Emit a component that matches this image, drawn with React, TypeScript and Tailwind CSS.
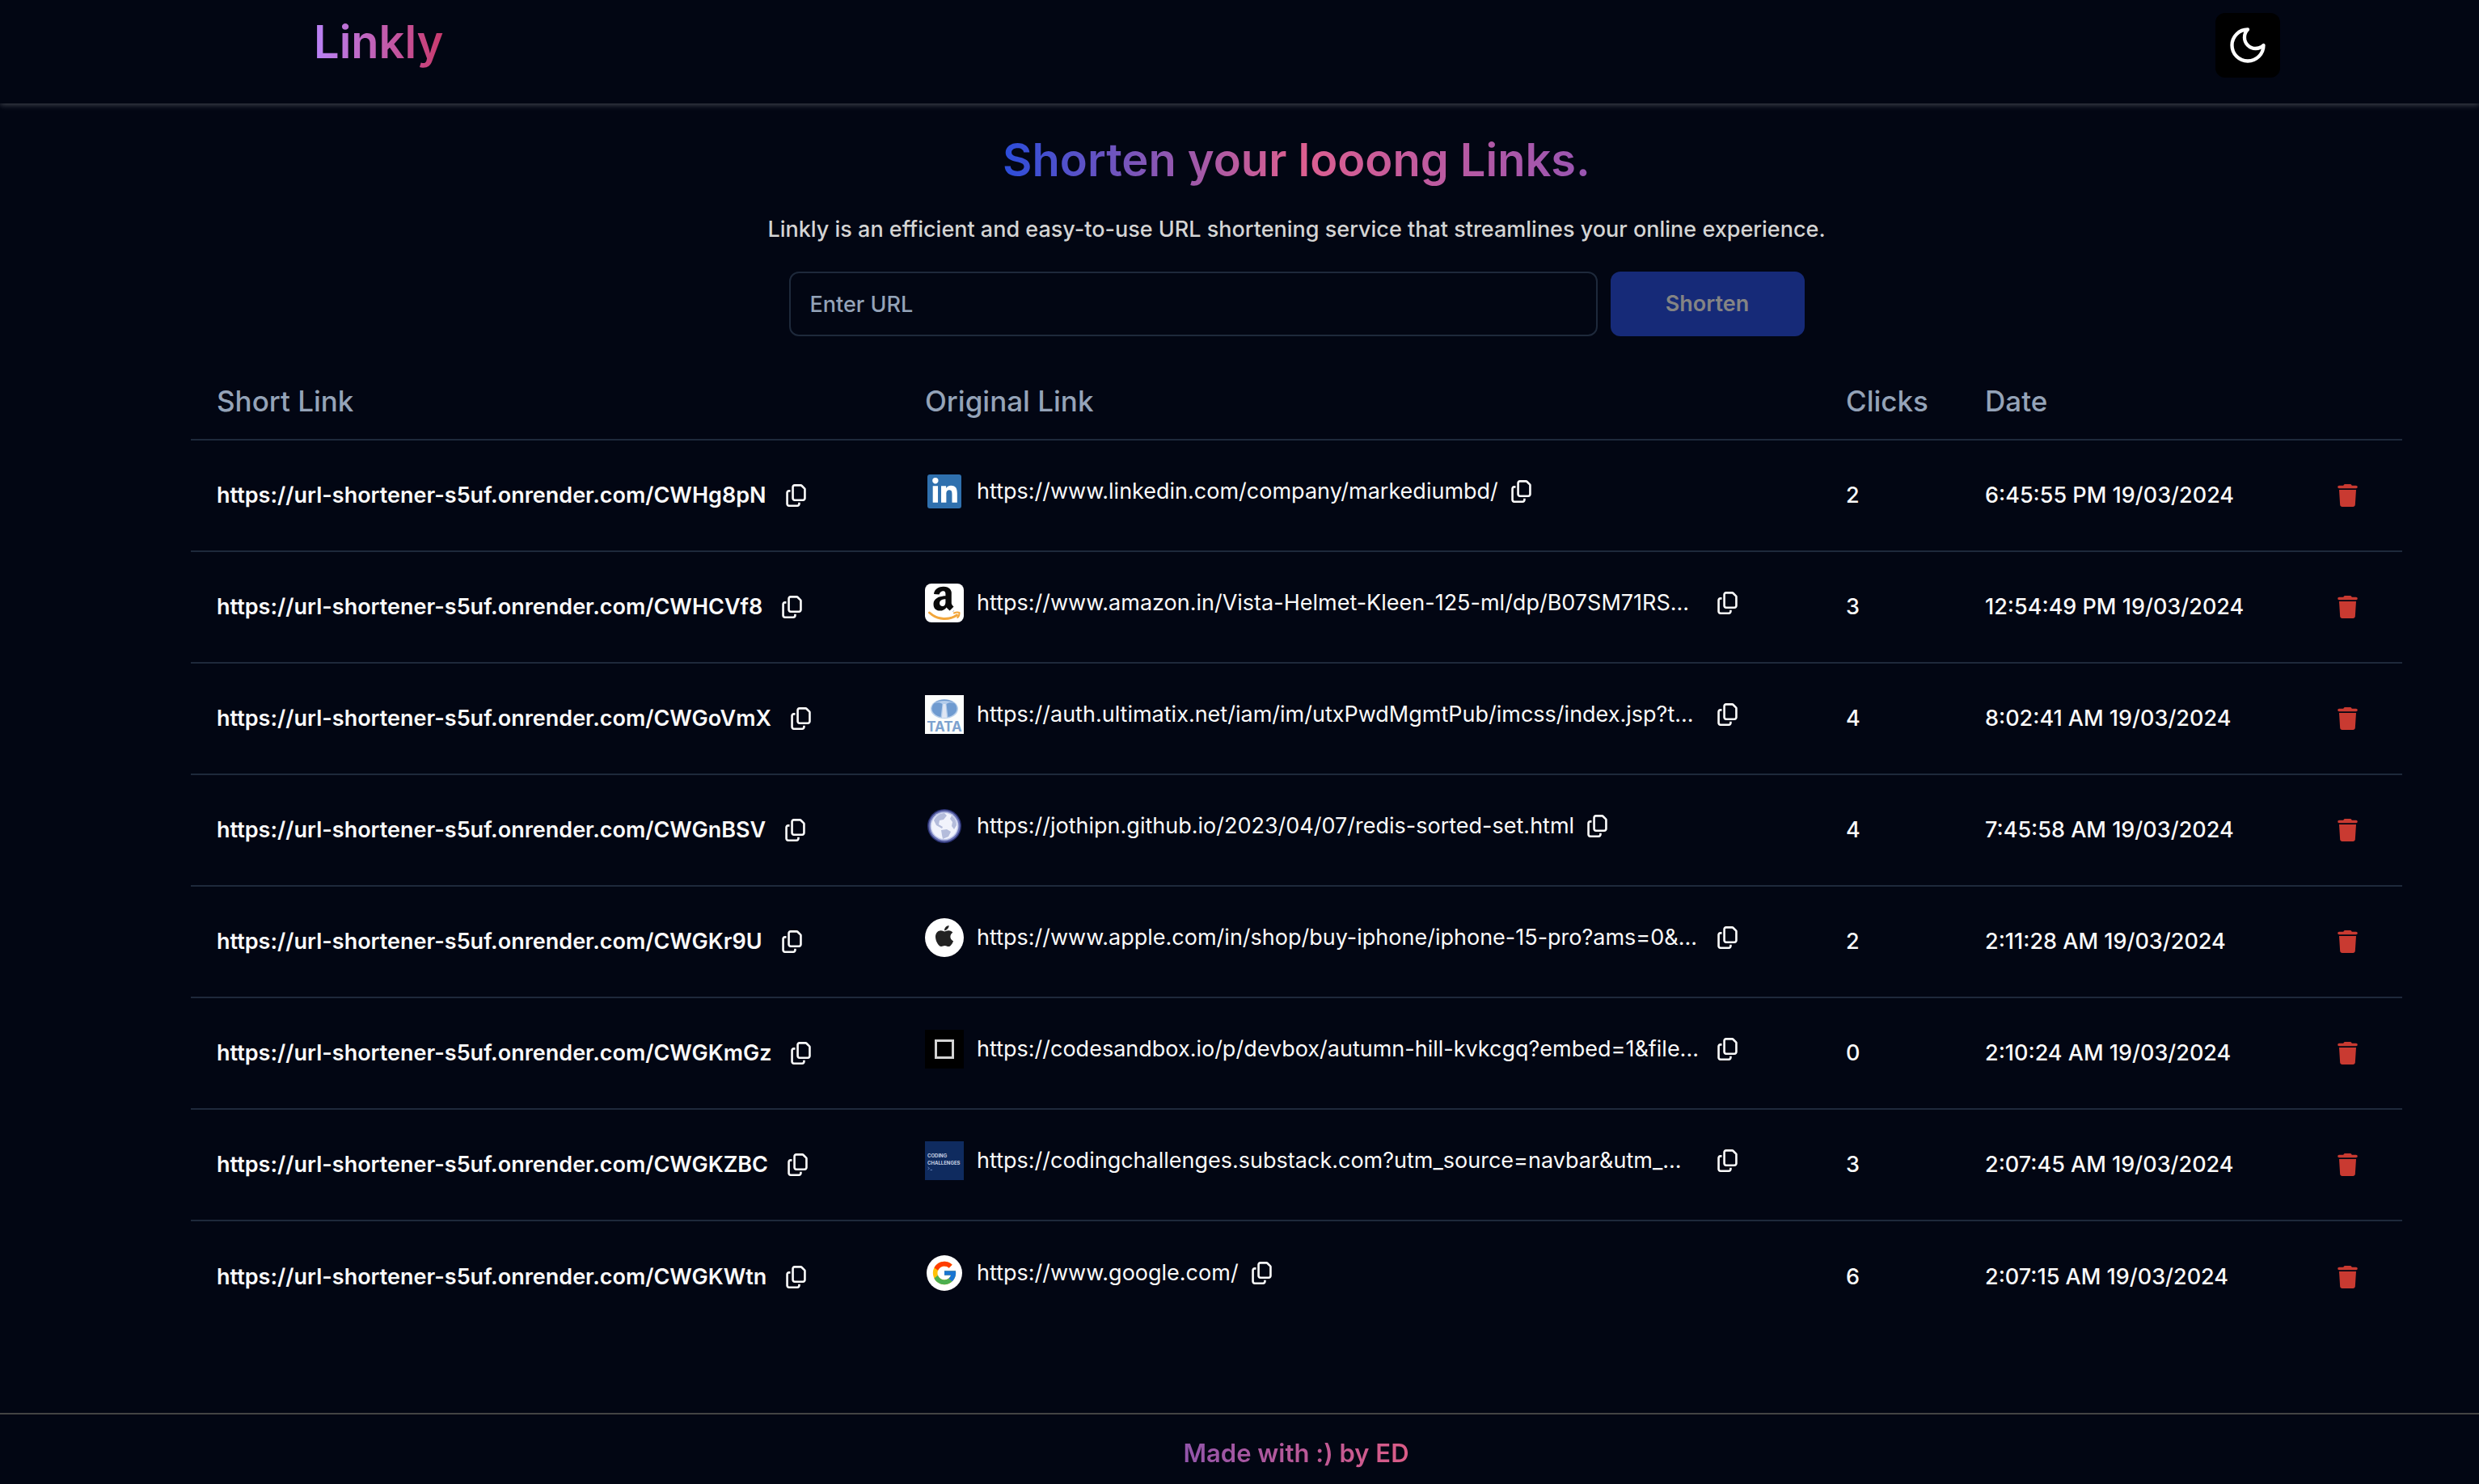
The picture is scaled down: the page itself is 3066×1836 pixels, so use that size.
import type { ReactNode } from "react";
import { FaAmazon, FaApple, FaLinkedinIn, FaRegCopy, FaTrash } from "react-icons/fa6";
import { FcGoogle } from "react-icons/fc";

function LinkedinFavicon() {
  return (
    <span className="flex size-12 items-center justify-center">
      <span className="flex size-[42px] items-center justify-center rounded-[3px] bg-[#2f70ae] text-white">
        <FaLinkedinIn size={35} />
      </span>
    </span>
  );
}

function AmazonFavicon() {
  return (
    <svg className="size-12 rounded-lg bg-white" viewBox="0 0 48 48" aria-hidden="true">
      <defs>
        <clipPath id="amazon-letter">
          <path d="M8 0h30v31l-3 3.5H11L8 30z" />
        </clipPath>
      </defs>
      <g clipPath="url(#amazon-letter)">
        <FaAmazon x={0} y={1} size={45} color="#0a0a0a" />
      </g>
      <path d="M5.5 36C16 45.500 30 45.500 39.500 39" fill="none" stroke="#f2a63b" strokeWidth="3" strokeLinecap="round" />
      <path d="M36 36.500c2.500-1.200 5-1.200 6.500-.5.200 2-.6 4.500-2.200 6" fill="none" stroke="#f2a63b" strokeWidth="2" strokeLinecap="round" strokeLinejoin="round" />
    </svg>
  );
}

function TataFavicon() {
  return (
    <svg className="size-12 bg-[#fcfdfc]" viewBox="0 0 48 48" aria-hidden="true">
      <ellipse cx="24" cy="17" rx="17" ry="12" fill="#b9d0ea" />
      <ellipse cx="24" cy="16.500" rx="15.500" ry="11" fill="#6f9bd0" />
      <path d="M11 10c7-4 19-4 26 0-5-1-8-1-10.500 1l2 17h-9l2-17C19 9 16 9 11 10z" fill="#b4cdec" />
      <path d="M22.500 11h3l1.500 17h-6z" fill="#dfe6f3" />
      <text x="24" y="44.500" textAnchor="middle" className="text-[17px] font-bold" fill="#7da2cf">
        TATA
      </text>
    </svg>
  );
}

function GlobeFavicon() {
  return (
    <svg className="size-12" viewBox="0 0 48 48" aria-hidden="true">
      <circle cx="24" cy="24" r="21" fill="#2c3374" />
      <circle cx="24" cy="24" r="19.500" fill="#6a73b4" />
      <circle cx="24" cy="24" r="17.500" fill="#c3caea" />
      <circle cx="24" cy="24" r="16" fill="#f1f3fc" />
      <path d="M11 17c2-5 7-9 13-9l3 3-4 5-5 1-1 5 5 3-1 2-7-4z" fill="#b4bcdb" />
      <path d="M33 11c4 3 6 7 6 12l-3 5-3-4 1-5-3-4z" fill="#b4bcdb" />
      <path d="M20 29l7-1 5 3-3 6-7 3-1-5z" fill="#b4bcdb" />
    </svg>
  );
}

function AppleFavicon() {
  return (
    <span className="flex size-12 items-center justify-center rounded-full bg-white pb-1 text-[#222222]">
      <FaApple size={30} />
    </span>
  );
}

function CodesandboxFavicon() {
  return (
    <span className="flex size-12 items-center justify-center bg-black">
      <span className="size-6 border-[3px] border-[#d4d4d4]" />
    </span>
  );
}

function CodingChallengesFavicon() {
  return (
    <svg className="size-12 bg-[#0f2b5f]" viewBox="0 0 48 48" aria-hidden="true">
      <text x="3" y="19.500" className="text-[6px] font-bold" fill="#c5cfe2">
        CODING
      </text>
      <text x="3" y="28.500" className="text-[6px] font-bold" fill="#c5cfe2">
        CHALLENGES
      </text>
      <path d="M3.500 32l2 1.500-2 1.500M6.500 35.500h2.500" fill="none" stroke="#5f7db4" strokeWidth="1" />
    </svg>
  );
}

function GoogleFavicon() {
  return (
    <span className="flex size-12 items-center justify-center">
      <span className="flex size-11 items-center justify-center rounded-full bg-white">
        <FcGoogle size={34} />
      </span>
    </span>
  );
}

type Link = {
  code: string;
  favicon: ReactNode;
  original: string;
  cut?: boolean;
  clicks: number;
  date: string;
};

const links: Link[] = [
  { code: "CWHg8pN", favicon: <LinkedinFavicon />, original: "https://www.linkedin.com/company/markediumbd/", clicks: 2, date: "6:45:55 PM 19/03/2024" },
  { code: "CWHCVf8", favicon: <AmazonFavicon />, original: "https://www.amazon.in/Vista-Helmet-Kleen-125-ml/dp/B07SM71RS...", cut: true, clicks: 3, date: "12:54:49 PM 19/03/2024" },
  { code: "CWGoVmX", favicon: <TataFavicon />, original: "https://auth.ultimatix.net/iam/im/utxPwdMgmtPub/imcss/index.jsp?t...", cut: true, clicks: 4, date: "8:02:41 AM 19/03/2024" },
  { code: "CWGnBSV", favicon: <GlobeFavicon />, original: "https://jothipn.github.io/2023/04/07/redis-sorted-set.html", clicks: 4, date: "7:45:58 AM 19/03/2024" },
  { code: "CWGKr9U", favicon: <AppleFavicon />, original: "https://www.apple.com/in/shop/buy-iphone/iphone-15-pro?ams=0&...", cut: true, clicks: 2, date: "2:11:28 AM 19/03/2024" },
  { code: "CWGKmGz", favicon: <CodesandboxFavicon />, original: "https://codesandbox.io/p/devbox/autumn-hill-kvkcgq?embed=1&file...", cut: true, clicks: 0, date: "2:10:24 AM 19/03/2024" },
  { code: "CWGKZBC", favicon: <CodingChallengesFavicon />, original: "https://codingchallenges.substack.com?utm_source=navbar&utm_...", cut: true, clicks: 3, date: "2:07:45 AM 19/03/2024" },
  { code: "CWGKWtn", favicon: <GoogleFavicon />, original: "https://www.google.com/", clicks: 6, date: "2:07:15 AM 19/03/2024" },
];

function CopyButton({ label }: { label: string }) {
  return (
    <button type="button" aria-label={label} className="shrink-0">
      <FaRegCopy size={28} className="w-[25px]" />
    </button>
  );
}

function Header() {
  return (
    <header className="pl-[140px] shadow-[0_2px_7px_rgba(255,255,255,0.24)]">
      <div className="flex h-32 items-start justify-between pt-4 pr-[246px] pl-[248px]">
        <a href="#" className="bg-linear-to-r/srgb from-[#b983f8] to-[#c93a6c] bg-clip-text text-[56px] leading-[72px] font-semibold text-transparent">
          Linkly
        </a>
        <button type="button" aria-label="Toggle theme" className="flex size-20 items-center justify-center rounded-xl bg-black text-white">
          <svg className="size-[52px]" viewBox="0 0 24 24" fill="none" stroke="currentColor" strokeWidth="2" strokeLinecap="round" strokeLinejoin="round" aria-hidden="true">
            <path d="M12 3a6 6 0 0 0 9 9 9 9 0 1 1-9-9Z" />
          </svg>
        </button>
      </div>
    </header>
  );
}

function LinksTable() {
  return (
    <table className="mt-8 w-full table-fixed border-separate border-spacing-0 text-left">
      <thead>
        <tr className="h-[97px] text-[35px] text-[#94a3b8] *:border-b-2 *:border-[#1e293b] *:px-8 *:font-medium">
          <th className="w-[876px]">Short Link</th>
          <th>Original Link</th>
          <th className="w-[172px]">Clicks</th>
          <th className="w-[412px]">Date</th>
          <th className="w-[136px]" aria-label="Delete" />
        </tr>
      </thead>
      <tbody>
        {links.map((link) => (
          <tr key={link.code} className="h-[138px] *:border-b-2 *:border-[#1e293b] *:px-8 last:*:border-b-0">
            <td>
              <div className="flex items-center gap-6 font-semibold">
                <a href="#">https://url-shortener-s5uf.onrender.com/{link.code}</a>
                <CopyButton label="Copy short link" />
              </div>
            </td>
            <td>
              <div className="flex items-center gap-4 pb-[10px] font-normal whitespace-nowrap">
                {link.favicon}
                <a href="#" className={link.cut ? "w-[900px]" : ""}>
                  {link.original}
                </a>
                <CopyButton label="Copy original link" />
              </div>
            </td>
            <td>{link.clicks}</td>
            <td className="whitespace-nowrap">{link.date}</td>
            <td>
              <button type="button" aria-label="Delete link" className="block pl-6 text-[#c93a31]">
                <FaTrash size={28} className="w-[25px]" />
              </button>
            </td>
          </tr>
        ))}
      </tbody>
    </table>
  );
}

export default function App() {
  return (
    <div className="flex min-h-screen flex-col bg-[#020613] font-['Inter',sans-serif] text-[27px] leading-10 font-medium text-[#fafafa]">
      <Header />
      <main className="flex-1 pt-8 pr-[95px] pl-[236px]">
        <div className="flex flex-col items-center">
          <h1 className="bg-linear-to-r/srgb from-[#2b4ddb] via-[#de5f8f] to-[#9855b2] bg-clip-text text-[56px] leading-[76px] font-semibold text-transparent">
            Shorten your looong Links.
          </h1>
          <p className="mt-7 text-[#d4d4d4]">
            Linkly is an efficient and easy-to-use URL shortening service that streamlines your online experience.
          </p>
          <form className="mt-8 flex gap-4" onSubmit={(event) => event.preventDefault()}>
            <input
              type="text"
              aria-label="Enter URL"
              placeholder="Enter URL"
              className="h-20 w-[1000px] rounded-xl border-2 border-[#1e293b] bg-transparent px-6 placeholder:text-[#94a3b8]"
            />
            <button type="submit" disabled className="h-20 w-60 rounded-xl bg-[#162a78] font-semibold text-[#848484]">
              Shorten
            </button>
          </form>
        </div>
        <LinksTable />
      </main>
      <footer className="flex justify-center border-t-2 border-[#434343] pt-7 pb-[18px] pl-[140px]">
        <p className="bg-linear-to-r/srgb from-[#9255ab] to-[#dc5c87] bg-clip-text text-[31px] font-semibold text-transparent">
          Made with :) by ED
        </p>
      </footer>
    </div>
  );
}
